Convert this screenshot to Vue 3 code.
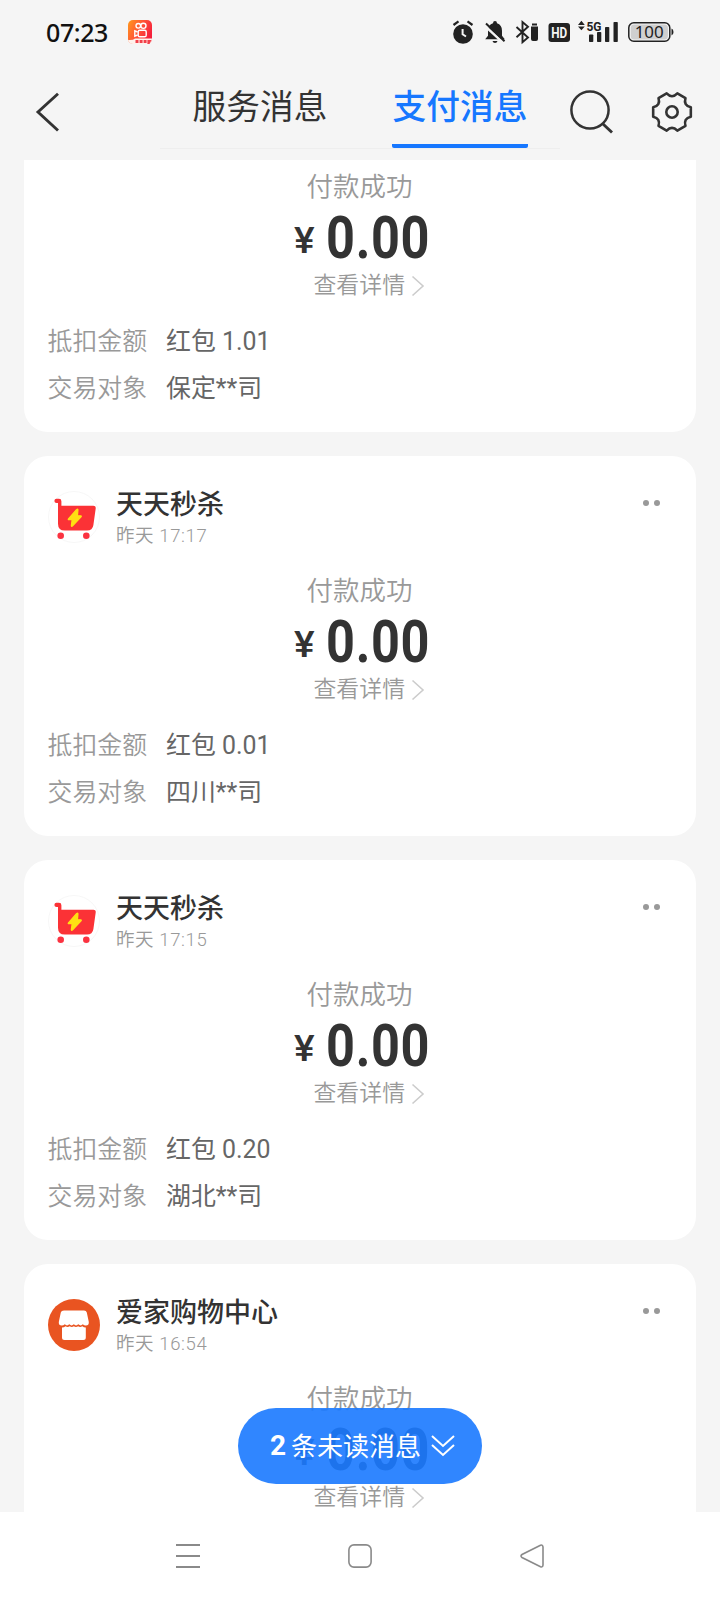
<script setup>
const cards = [
  { id: 1, bonus: '1.01', target: '保定**司' },
  { id: 2, shop: '天天秒杀', icon: 'cart', time: '17:17', bonus: '0.01', target: '四川**司' },
  { id: 3, shop: '天天秒杀', icon: 'cart', time: '17:15', bonus: '0.20', target: '湖北**司' },
  { id: 4, shop: '爱家购物中心', icon: 'store', time: '16:54' },
]

// Settings gear: six flat teeth joined by curved notches
const polar = (r, deg) => {
  const a = (deg * Math.PI) / 180
  return `${(r * Math.cos(a)).toFixed(2)} ${(r * Math.sin(a)).toFixed(2)}`
}
const gear =
  `M${polar(19.4, -14)}` +
  [0, 60, 120, 180, 240, 300]
    .map((d) => `L${polar(19.4, d + 14)}Q${polar(13, d + 30)} ${polar(19.4, d + 46)}`)
    .join('') +
  'Z'
</script>

<template>
  <div class="screen">
    <header class="status">
      <span class="clock">07:23</span>
      <svg class="app" width="24" height="24" viewBox="0 0 24 24">
        <defs>
          <linearGradient id="ks" x1="0" y1="0" x2="1" y2=".5">
            <stop offset="0" stop-color="#ff9a1c" />
            <stop offset=".55" stop-color="#ff5238" />
            <stop offset="1" stop-color="#f5203c" />
          </linearGradient>
        </defs>
        <rect width="24" height="24" rx="5" fill="url(#ks)" />
        <g fill="none" stroke="#fff" stroke-width="1.4">
          <circle cx="10.3" cy="5.8" r="2.3" />
          <circle cx="15.4" cy="5.8" r="2.6" />
          <rect x="10.2" y="10.2" width="8" height="6.6" rx="1.6" />
          <path d="M9.6 12 6.8 10.8v5.4l2.8-1.2" />
        </g>
        <path d="M0 20Q5 20.5 7 18.6H24V19q0 5-5 5H5Q1 24 0 20z" fill="#fff2ec" />
        <path d="M7.5 20h3v3h-3zM11.600 20h3v3h-3zM15.600 20h3v3h-3zM19.400 20h4.100l-2 4h-2.100z" fill="#f2404a" />
      </svg>
      <svg class="indicators" width="230" height="36" viewBox="448 15 230 36">
        <g fill="#222">
          <circle cx="463" cy="34" r="9.8" />
          <path d="m453.5 25 5-3.6M472.500 25l-5-3.6" stroke="#222" stroke-width="2.2" />
          <path d="M462.600 29v5.300l3.400 2.200" fill="none" stroke="#f5f5f5" stroke-width="2" />
          <path d="M495 21q2 0 2 2.300 5 1.600 5 7.500v5l2.800 3.400h-19.600l2.800-3.400v-5q0-5.900 5-7.500 0-2.300 2-2.300zM492.500 41h5q-.5 2-2.500 2t-2.500-2z" />
          <path d="m484.500 25.500 19 17.500" stroke="#f5f5f5" stroke-width="2.400" />
          <path d="m486 23.500 18.500 17.800" stroke="#222" stroke-width="2" />
          <path d="m516.500 27 11.500 10.500-5.500 4.700V22l5.500 4.700-11.500 10.500" fill="none" stroke="#222" stroke-width="1.900" />
          <path d="M532 23.500h5v2h-5zM531 26.500h7V39q0 2-2 2h-3q-2 0-2-2z" />
          <rect x="548.500" y="23" width="21.500" height="19" rx="3" />
          <path d="m578 25 3.400-4.200 3.400 4.200zM578 26.500l3.400 3.800 3.400-3.800z" />
          <rect x="589" y="34.500" width="4.300" height="7.500" rx=".8" />
          <rect x="597" y="32" width="4.300" height="10" rx=".8" />
          <rect x="605" y="27" width="4.300" height="15" rx=".8" />
          <rect x="613.500" y="22" width="4.300" height="20" rx=".8" />
          <path d="M671.500 28.500q2 .5 2 3.500t-2 3.500z" />
        </g>
        <rect x="628.800" y="22.700" width="41" height="18.600" rx="5" fill="#f5f5f5" stroke="#222" stroke-width="1.500" />
        <rect x="630.700" y="24.600" width="37.200" height="14.800" rx="3.500" fill="#cfcfcf" />
        <text class="hd" x="559.200" y="38" text-anchor="middle" textLength="16" lengthAdjust="spacingAndGlyphs">HD</text>
        <text class="net" x="586.500" y="30.500" textLength="15" lengthAdjust="spacingAndGlyphs">5G</text>
        <text class="pct" x="649.200" y="38" text-anchor="middle" textLength="29" lengthAdjust="spacingAndGlyphs">100</text>
      </svg>
    </header>

    <nav class="bar">
      <svg class="back" width="26" height="42" viewBox="0 0 26 42">
        <path d="M24 2.800 4 21l20 18.500" fill="none" stroke="#333" stroke-width="2.900" />
      </svg>
      <div class="tabs">
        <span class="tab">服务消息</span>
        <span class="tab active">支付消息</span>
      </div>
      <svg class="search" width="46" height="46" viewBox="0 0 46 46">
        <circle cx="21" cy="21" r="18.600" fill="none" stroke="#333" stroke-width="2.500" />
        <path d="m33.500 34.500 9.500 9" stroke="#333" stroke-width="2.900" />
      </svg>
      <svg class="gear" width="44" height="44" viewBox="-22 -22 44 44">
        <path :d="gear" fill="none" stroke="#333" stroke-width="2.600" stroke-linejoin="round" />
        <circle r="5.700" fill="none" stroke="#333" stroke-width="2.600" />
      </svg>
    </nav>

    <main class="feed">
      <section v-for="c in cards" :key="c.id" class="card" :class="{ cut: !c.shop, last: !c.bonus }">
        <div v-if="c.shop" class="head">
          <svg v-if="c.icon === 'cart'" class="avatar" width="52" height="52" viewBox="0 0 52 52">
            <circle cx="26" cy="26" r="25.500" fill="#fff" stroke="#f7f7f7" />
            <path d="M8.500 7.800H11q2.400 0 2.400 2.400v4.600h32q2.700 0 2.300 2.700L45.400 34q-.8 5.600-6.400 5.600H16.800q-6.800 0-6.800-6.800V12H8.500q-2.100 0-2.100-2.100t2.100-2.100z" fill="#fb3236" />
            <circle cx="12.700" cy="44.800" r="3.300" fill="#fb3240" />
            <circle cx="38.300" cy="44.800" r="3.300" fill="#fb3240" />
            <path d="M28.500 18.700 20.500 27.800q-.7.900.5.900h3.200l-.8 5.900q0 1.300 1 .5l8.600-9.300q.8-1-.4-1h-3.200l.5-5.900q0-1.200-1.400-.2z" fill="#ffe013" stroke="#ffe013" stroke-width="1.300" />
          </svg>
          <svg v-else class="avatar" width="52" height="52" viewBox="0 0 52 52">
            <circle cx="26" cy="26" r="26" fill="#e95421" />
            <path d="M16 11.500h20q2.300 0 2.800 2l2 9.500q.3 3.500-3 3.500-1.700 0-3-1.200-2 2.200-4.500 0-2.200 2.200-4.500 0-2.200 2.200-4.500 0-2.200 2.200-4.500 0-1.300 1.200-3 1.200-3.300 0-3-3.500l2-9.500q.5-2 3.200-2z" fill="#fff" />
            <path d="M14 28.500q2 0 3.500-1.200 2 1.500 4.200 0 2 1.500 4.200 0 2 1.500 4.200 0 2 1.500 4.200 0 1.500 1.200 3.500 1.200v10q0 2.500-2.500 2.500H16.500q-2.500 0-2.500-2.500z" fill="#fff" />
          </svg>
          <div class="who">
            <b class="shop">{{ c.shop }}</b>
            <span class="time">昨天 {{ c.time }}</span>
          </div>
          <span class="more"><i></i><i></i></span>
        </div>
        <div class="pay">
          <span class="result">付款成功</span>
          <div class="amount"><span class="yen">¥</span><span class="num">0.00</span></div>
          <span class="detail">查看详情<svg width="14" height="22" viewBox="0 0 14 22"><path d="m1.500 1.500 10.500 9.500-10.500 9.500" fill="none" stroke="#ccc" stroke-width="1.600" /></svg></span>
        </div>
        <dl v-if="c.bonus" class="rows">
          <div class="row"><dt>抵扣金额</dt><dd>红包 {{ c.bonus }}</dd></div>
          <div class="row"><dt>交易对象</dt><dd>{{ c.target }}</dd></div>
        </dl>
      </section>
    </main>

    <button class="unread">
      <b>2</b><span>条未读消息</span>
      <svg width="24" height="24" viewBox="0 0 24 24"><path d="m1 2 11 10L23 2M1 11l11 10 11-10" fill="none" stroke="#fff" stroke-width="2" /></svg>
    </button>

    <footer class="system">
      <svg width="24" height="26" viewBox="0 0 24 26"><path d="M0 2h24M0 13h24M0 24h24" stroke="#8a8a8a" stroke-width="1.800" /></svg>
      <svg width="24" height="26" viewBox="0 0 24 26"><rect x=".9" y="1.900" width="22.200" height="22.200" rx="5" fill="none" stroke="#8a8a8a" stroke-width="1.600" /></svg>
      <svg width="24" height="26" viewBox="0 0 24 26"><path d="M20.500 2.200 2 11.500q-2 1.500 0 3l18.500 9.300q2.300.7 2.500-1.800V4q-.2-2.500-2.500-1.800z" fill="none" stroke="#8a8a8a" stroke-width="1.600" /></svg>
    </footer>
  </div>
</template>

<style>
body { margin: 0; background: #f5f5f5; }
</style>

<style scoped>
.screen {
  position: relative;
  display: flex;
  flex-direction: column;
  width: 720px;
  height: 1600px;
  overflow: hidden;
  background: #f5f5f5;
  color: #333;
  font-family: Roboto, "Noto Sans CJK SC", sans-serif;
}
.status { display: flex; align-items: center; height: 64px; flex: none; box-sizing: border-box; padding: 0 42px 0 46px; }
.clock { width: 82px; font: 500 25px/64px "Noto Sans", sans-serif; color: #111; letter-spacing: -.4px; }
.indicators { margin-left: auto; margin-top: 2px; }
.hd { font: 700 14px Roboto, sans-serif; fill: #f5f5f5; }
.net { font: 700 13.500px Roboto, sans-serif; fill: #222; }
.pct { font: 400 16px "Noto Sans", sans-serif; fill: #222; }
.bar { display: flex; align-items: flex-start; height: 96px; flex: none; box-sizing: border-box; padding-left: 34px; }
.back { margin-top: 27px; }
.tabs { display: flex; gap: 64px; width: 400px; height: 85px; box-sizing: border-box; margin-left: 100px; padding-left: 32px; border-bottom: 1px solid #eeeeee; }
.tab { width: 136px; height: 84px; box-sizing: border-box; font-size: 33.700px; line-height: 88px; text-align: center; white-space: nowrap; }
.active { border-bottom: 4px solid #1677ff; border-radius: 2px; color: #1677ff; font-weight: 500; }
.search { margin: 25px 0 0 9px; }
.gear { margin: 26px 0 0 35px; }
.feed { display: flex; flex-direction: column; gap: 24px; height: 1352px; flex: none; padding: 0 24px; overflow: hidden; box-sizing: border-box; }
.card { flex: none; height: 380px; box-sizing: border-box; padding: 0 24px; border-radius: 24px; background: #fff; }
.cut { height: 272px; border-radius: 0 0 24px 24px; }
.last { height: 248px; border-radius: 24px 24px 0 0; }
.head { display: flex; height: 108px; box-sizing: border-box; padding-top: 35px; }
.avatar { margin-left: -.5px; }
.who { display: flex; flex-direction: column; margin: -4px 0 0 16.500px; }
.shop { font-size: 27px; line-height: 36px; font-weight: 500; }
.time { font-size: 18.500px; line-height: 26px; color: #999; font-weight: 350; letter-spacing: .6px; }
.more { display: flex; gap: 5px; margin: 9px 12px 0 auto; }
.more i { width: 6px; height: 6px; border-radius: 50%; background: #999; }
.pay { display: flex; flex-direction: column; align-items: center; }
.result { margin: 9px 1px 0 0; font-size: 26.500px; line-height: 36px; color: #999; font-weight: 350; }
.amount { display: flex; height: 64px; width: 136px; }
.yen { flex: none; width: 32px; margin-left: 2px; font-size: 37px; line-height: 72px; font-weight: 500; transform: scaleX(1.05); transform-origin: 0 50%; }
.num { flex: none; font-size: 59px; line-height: 65px; font-weight: 700; letter-spacing: .800px; transform: scaleX(.855); transform-origin: 0 50%; }
.detail { display: flex; align-items: center; gap: 6px; margin-left: 18.500px; font-size: 22.900px; line-height: 34px; color: #999; font-weight: 350; }
.rows { margin: 15.500px 0 0 -.5px; }
.row { display: flex; height: 47px; font-size: 24.900px; line-height: 46px; }
dt { width: 118.500px; color: #999; font-weight: 350; }
dd { margin: 0; color: #666; font-weight: 400; }
.unread { position: absolute; left: 238px; top: 1408px; display: flex; align-items: center; width: 244px; height: 76px; box-sizing: border-box; padding: 0 0 0 32px; border: 0; border-radius: 38px; background: rgba(28, 122, 255, .91); color: #fff; font: 400 26px/76px Roboto, "Noto Sans CJK SC", sans-serif; }
.unread b { font-size: 28px; width: 21px; text-align: left; }
.unread span { width: 130px; white-space: nowrap; padding-top: 1px; }
.unread svg { margin-left: 9.500px; }
.system { display: flex; align-items: center; justify-content: space-between; height: 88px; flex: none; box-sizing: border-box; padding: 0 176px; background: #fff; }
</style>
